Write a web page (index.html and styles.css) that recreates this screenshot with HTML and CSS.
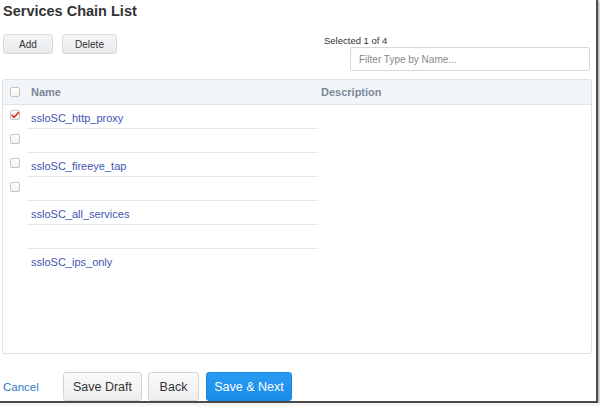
FILE: index.html
```html
<!DOCTYPE html>
<html>
<head>
<meta charset="utf-8">
<link rel="stylesheet" href="styles.css">
</head>
<body>
<div class="frame">
  <h1 class="title">Services Chain List</h1>
  <div class="toolbar">
    <div class="actions">
      <button class="btn-sm">Add</button>
      <button class="btn-sm">Delete</button>
    </div>
    <div class="filter">
      <div class="selected">Selected 1 of 4</div>
      <input class="filter-input" type="text" placeholder="Filter Type by Name...">
    </div>
  </div>
  <div class="table">
    <div class="thead">
      <div class="col-check"><span class="cb"></span></div>
      <div class="col-name">Name</div>
      <div class="col-desc">Description</div>
    </div>
    <div class="tbody">
      <div class="checks">
        <div class="check-cell"><span class="cb checked"><svg viewBox="0 0 10 10" width="10" height="10"><path d="M2 5.2 L4.2 7.3 L8.4 2.6" fill="none" stroke="#d9302c" stroke-width="1.6" stroke-linecap="round" stroke-linejoin="round"/></svg></span></div>
        <div class="check-cell"><span class="cb"></span></div>
        <div class="check-cell"><span class="cb"></span></div>
        <div class="check-cell"><span class="cb"></span></div>
      </div>
      <div class="names">
        <div class="name-cell"><a class="link">ssloSC_http_proxy</a></div>
        <div class="name-cell"></div>
        <div class="name-cell"><a class="link">ssloSC_fireeye_tap</a></div>
        <div class="name-cell"></div>
        <div class="name-cell"><a class="link">ssloSC_all_services</a></div>
        <div class="name-cell"></div>
        <div class="name-cell last"><a class="link">ssloSC_ips_only</a></div>
      </div>
      <div class="descs"></div>
    </div>
  </div>
  <div class="footer">
    <a class="cancel">Cancel</a>
    <button class="btn btn-draft">Save Draft</button>
    <button class="btn btn-back">Back</button>
    <button class="btn btn-primary">Save &amp; Next</button>
  </div>
</div>
</body>
</html>
```

FILE: styles.css
```css
* { box-sizing: border-box; }
html, body { margin: 0; padding: 0; background: #f4f4f4; }
body { font-family: "Liberation Sans", Arial, sans-serif; color: #333; }
button { margin: 0; white-space: nowrap; flex-shrink: 0; }

.frame {
  width: 598px;
  height: 403px;
  background: #fff;
  border-right: 2px solid #4b4b4b;
  border-bottom: 2px solid #4b4b4b;
  box-shadow: 1px 1px 2px rgba(0,0,0,0.35);
  padding: 0 0 0 3px;
  display: flex;
  flex-direction: column;
}

.title {
  margin: 0;
  font-size: 14.5px;
  line-height: 20px;
  font-weight: bold;
  color: #333;
  padding-top: 1px;
}

.toolbar {
  display: flex;
  justify-content: space-between;
  align-items: flex-start;
  margin-top: 12px;
  padding-right: 6px;
}
.actions { display: flex; gap: 9px; margin-top: 1px; }
.btn-sm {
  height: 20px;
  padding: 0;
  font-family: "Liberation Sans", Arial, sans-serif;
  font-size: 10px;
  color: #333;
  background: linear-gradient(#f5f6f7, #e8eaec);
  border: 1px solid #d6d9dc;
  border-radius: 3px;
}
.btn-sm:first-child { width: 50px; }
.btn-sm:last-child { width: 55px; }

.filter { width: 266px; margin-top: 2px; }
.selected { font-size: 9.5px; line-height: 12px; color: #333; }
.filter-input {
  display: block;
  margin: 0 0 0 26px;
  width: 240px;
  height: 24px;
  border: 1px solid #d8d8d8;
  border-radius: 2px;
  padding: 0 8px;
  font-family: "Liberation Sans", Arial, sans-serif;
  font-size: 10px;
  color: #333;
  outline: none;
}
.filter-input::placeholder { color: #888; }

.table {
  margin: 8px 0 0 -1px;
  width: 590px;
  height: 275px;
  border: 1px solid #e0e0e0;
  border-radius: 3px;
  overflow: hidden;
}
.thead {
  display: flex;
  height: 25px;
  align-items: center;
  background: #f3f6f9;
  border-bottom: 1px solid #e1e5ea;
  font-size: 11px;
  font-weight: bold;
  color: #7b8698;
}
.col-check { width: 24px; padding-left: 7px; display: flex; align-items: center; }
.col-name { width: 291px; padding-left: 4px; }
.col-desc { flex: 1; padding-left: 3px; }

.cb {
  display: block;
  width: 10px;
  height: 10px;
  border: 1px solid #c5c5c5;
  border-radius: 2px;
  background: linear-gradient(#fff, #f1f1f1);
  position: relative;
}
.cb svg { position: absolute; left: -1px; top: -1px; }

.tbody { display: flex; }
.checks { width: 24px; }
.check-cell { height: 24px; padding: 5px 0 0 7px; }
.names { width: 291px; }
.name-cell {
  height: 24px;
  border-bottom: 1px solid #e6e6e6;
  padding-left: 4px;
  padding-top: 2px;
  font-size: 11px;
  line-height: 22px;
}
.name-cell.last { border-bottom: none; }
.link { color: #3f55b4; text-decoration: none; }
.descs { flex: 1; }

.footer {
  display: flex;
  align-items: center;
  margin-top: 18px;
}
.cancel {
  font-size: 11.5px;
  color: #2d7cc4;
  width: 60px;
  flex-shrink: 0;
}
.btn {
  height: 29px;
  padding: 0;
  font-family: "Liberation Sans", Arial, sans-serif;
  font-size: 12.5px;
  color: #333;
  background: linear-gradient(#fafafa, #eeeeee);
  border: 1px solid #d4d4d4;
  border-radius: 3px;
}
.btn-draft { width: 79px; }
.btn-back { width: 51px; margin-left: 6px; }
.btn-primary {
  width: 86px;
  margin-left: 7px;
  color: #fff;
  background: linear-gradient(#2a9cf3, #1a8ae8);
  border-color: #1a86e0;
}
```
